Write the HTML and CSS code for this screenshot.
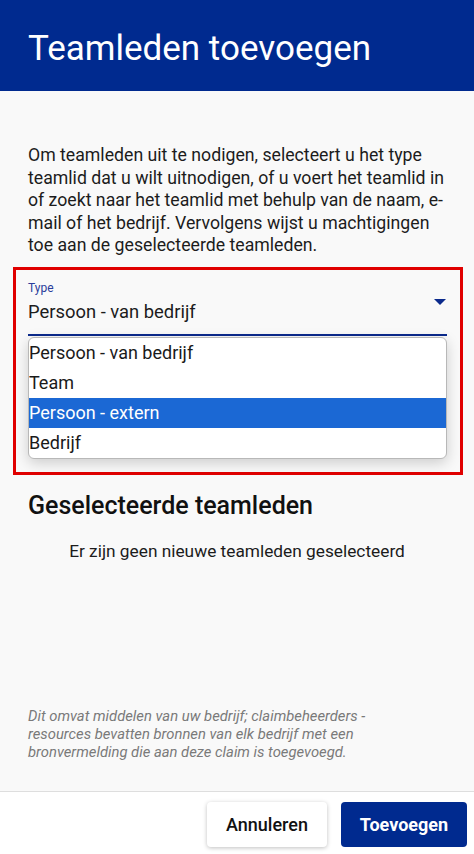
FILE: index.html
```html
<!DOCTYPE html>
<html lang="nl">
<head>
  <meta charset="UTF-8" />
  <meta name="viewport" content="width=device-width, initial-scale=1" />
  <title>Teamleden toevoegen</title>
  <link rel="stylesheet" href="styles.css">
</head>
<body>

  <header class="dialog-header">
    <h1>Teamleden toevoegen</h1>
  </header>

  <main class="dialog-content">
    <p class="intro">Om teamleden uit te nodigen, selecteert u het type teamlid dat u wilt uitnodigen, of u voert het teamlid in of zoekt naar het teamlid met behulp van de naam, e-mail of het bedrijf. Vervolgens wijst u machtigingen toe aan de geselecteerde teamleden.</p>

    <div class="type-box">
      <div class="select-field">
        <div class="select-text">
          <span class="select-label">Type</span>
          <span class="select-value">Persoon - van bedrijf</span>
        </div>
        <svg class="select-arrow" width="12" height="6" viewBox="0 0 12 6"><path d="M0 0h12L6 6z" fill="#0b2a8c"/></svg>
      </div>
      <ul class="select-list">
        <li>Persoon - van bedrijf</li>
        <li>Team</li>
        <li class="active">Persoon - extern</li>
        <li>Bedrijf</li>
      </ul>
    </div>

    <h2 class="section-title">Geselecteerde teamleden</h2>
    <p class="empty">Er zijn geen nieuwe teamleden geselecteerd</p>

    <p class="note">Dit omvat middelen van uw bedrijf; claimbeheerders - resources bevatten bronnen van elk bedrijf met een bronvermelding die aan deze claim is toegevoegd.</p>
  </main>

  <footer class="dialog-footer">
    <button class="btn btn-secondary">Annuleren</button>
    <button class="btn btn-primary">Toevoegen</button>
  </footer>

</body>
</html>
```

FILE: styles.css
```css
* {
  box-sizing: border-box;
}

html, body {
  height: 100%;
}

body {
  margin: 0;
  font-family: Roboto, 'Noto Sans', sans-serif;
  background-color: #f9f9f9;
  color: #1c1c1c;
  display: flex;
  flex-direction: column;
}

.dialog-header {
  height: 91px;
  flex-shrink: 0;
  background-color: #002a8f;
  padding: 28px 28px 0;
}

.dialog-header h1 {
  margin: 0;
  font-size: 35px;
  line-height: 42px;
  font-weight: 400;
  color: white;
}

.dialog-content {
  flex: 1;
  display: flex;
  flex-direction: column;
  padding: 53px 28px 30px;
}

.intro {
  margin: 0 -8px 0 0;
  font-size: 17.7px;
  line-height: 22.5px;
}

.type-box {
  margin: 10px -17px 0 -15px;
  border: 3px solid #e00000;
  padding: 11px 13px 13px 12px;
}

.select-field {
  display: flex;
  align-items: flex-start;
  justify-content: space-between;
  border-bottom: 2px solid #0b2a8c;
  padding-bottom: 10px;
}

.select-text {
  display: flex;
  flex-direction: column;
  gap: 5px;
}

.select-label {
  font-size: 12px;
  line-height: 14px;
  color: #2b3d9b;
}

.select-value {
  font-size: 18.4px;
  line-height: 24px;
}

.select-arrow {
  margin: 18px 1px 0 0;
}

.select-list {
  list-style: none;
  margin: 1px 0 0;
  padding: 0;
  background: white;
  border: 1px solid #b8b8b8;
  border-radius: 6px;
  overflow: hidden;
  box-shadow: 0 4px 14px rgba(0, 0, 0, 0.18);
}

.select-list li {
  height: 30px;
  line-height: 30px;
  font-size: 18px;
  color: #1a1a1a;
}

.select-list li.active {
  background-color: #1b68d4;
  color: white;
}

.section-title {
  margin: 17px 0 0;
  font-size: 25px;
  line-height: 28px;
  font-weight: 500;
  color: #111;
}

.empty {
  margin: 19px 0 0;
  text-align: center;
  font-size: 17.3px;
  line-height: 24px;
}

.note {
  margin: auto 40px 0 0;
  font-size: 14.8px;
  line-height: 18px;
  font-style: italic;
  color: #7a7a7a;
}

.dialog-footer {
  flex-shrink: 0;
  height: 63px;
  background: white;
  border-top: 1px solid #dedede;
  display: flex;
  justify-content: flex-end;
  align-items: flex-start;
  gap: 14px;
  padding: 10px 7px 0;
}

.btn {
  height: 45px;
  border: none;
  border-radius: 4px;
  font-family: Roboto, sans-serif;
  font-size: 18px;
  font-weight: 500;
  cursor: pointer;
}

.btn-secondary {
  width: 120px;
  background: white;
  color: #111;
  box-shadow: 0 1px 4px rgba(0, 0, 0, 0.25);
}

.btn-primary {
  width: 126px;
  background: #002a8f;
  color: white;
  font-weight: 700;
}
```
